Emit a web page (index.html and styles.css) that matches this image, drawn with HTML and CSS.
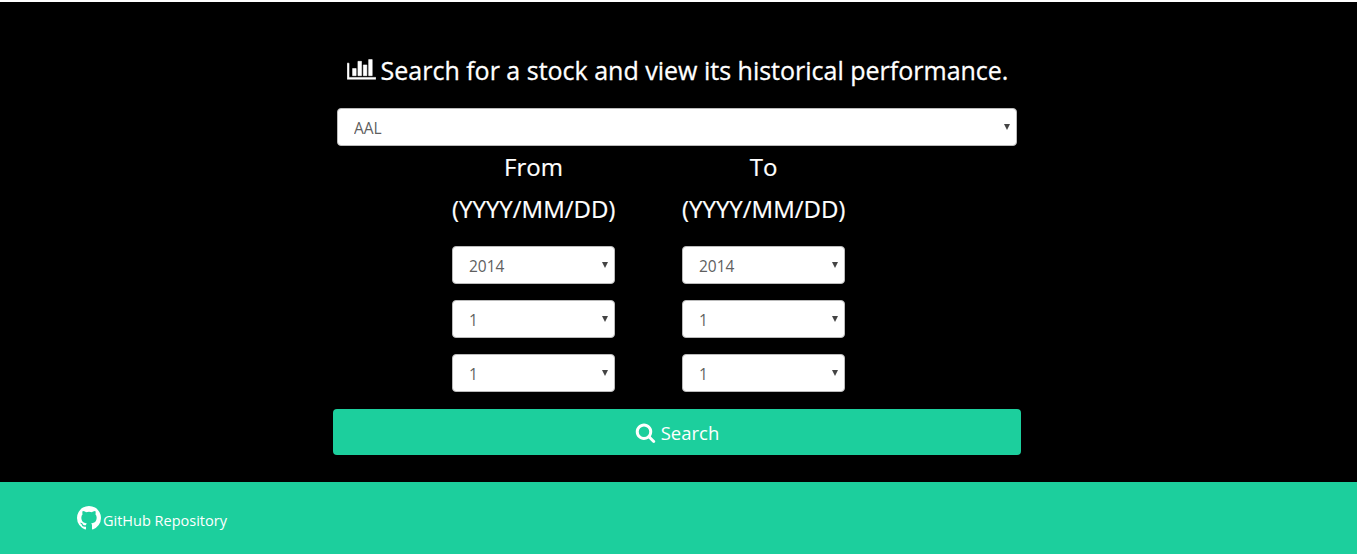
FILE: index.html
```html
<!DOCTYPE html>
<html lang="en">
<head>
<meta charset="utf-8">
<title>Stock history</title>
<link rel="stylesheet" href="styles.css">
</head>
<body>
<main class="hero">
  <h1 class="title">
    <svg class="icon-chart" viewBox="0 0 2048 1792" aria-hidden="true"><path d="M640 896v512h-256v-512h256zm384-512v1024h-256v-1024h256zm1024 1152v128h-2048v-1152h128v1024h1920zm-640-896v768h-256v-768h256zm384-384v1152h-256v-1152h256z"/></svg>
    <span>Search for a stock and view its historical performance.</span>
  </h1>
  <form class="form">
    <div class="select-wrap"><select class="select"><option>AAL</option></select></div>
    <div class="dates">
      <div class="date-col">
        <div class="date-label">From<br>(YYYY/MM/DD)</div>
        <div class="select-wrap"><select class="select"><option>2014</option></select></div>
        <div class="select-wrap"><select class="select"><option>1</option></select></div>
        <div class="select-wrap"><select class="select"><option>1</option></select></div>
      </div>
      <div class="date-col">
        <div class="date-label">To<br>(YYYY/MM/DD)</div>
        <div class="select-wrap"><select class="select"><option>2014</option></select></div>
        <div class="select-wrap"><select class="select"><option>1</option></select></div>
        <div class="select-wrap"><select class="select"><option>1</option></select></div>
      </div>
    </div>
    <button class="search" type="button">
      <svg class="icon-search" viewBox="0 0 1792 1792" aria-hidden="true"><path d="M1216 832q0-185-131.5-316.5t-316.5-131.5-316.5 131.5-131.5 316.5 131.5 316.5 316.5 131.5 316.5-131.5 131.5-316.5zm512 832q0 52-38 90t-90 38q-54 0-90-38l-343-342q-179 124-399 124-143 0-273.5-55.5t-225-150-150-225-55.5-273.5 55.5-273.5 150-225 225-150 273.5-55.5 273.5 55.5 225 150 150 225 55.5 273.5q0 220-124 399l343 343q37 37 37 90z"/></svg>
      <span>Search</span>
    </button>
  </form>
</main>
<footer class="footer">
  <a class="repo" href="#">
    <svg class="icon-github" viewBox="128 128 1536 1536" aria-hidden="true"><path d="M1664 896q0 251-146.5 451.5t-378.5 278.5q-27 5-39.5-7t-12.5-30v-211q0-97-52-142 57-6 102.5-18t94-39 81-66.5 53-105 20.5-150.5q0-121-79-206 37-91-8-204-28-9-81 11t-92 44l-38 24q-93-26-192-26t-192 26q-16-11-42.5-27t-83.5-38.5-86-13.5q-44 113-7 204-79 85-79 206 0 85 20.5 150t52.5 105 80.5 67 94 39 102.5 18q-40 36-49 103-21 10-45 15t-57 5-65.5-21.5-55.5-62.5q-19-32-48.5-52t-49.5-24l-20-3q-21 0-29 4.5t-5 11.5 9 14 13 12l7 5q22 10 43.5 38t31.5 51l10 23q13 38 44 61.5t67 30 69.5 7 55.5-3.5l23-4q0 38 .5 89t.5 54q0 18-13 30t-40 7q-232-78-378.5-278.5t-146.5-451.5q0-209 103-385.5t279.5-279.5 385.5-103 385.5 103 279.5 279.5 103 385.5z"/></svg>
    <span>GitHub Repository</span>
  </a>
</footer>
</body>
</html>
```
FILE: styles.css
```css
* { box-sizing: border-box; }
html, body { margin: 0; background: #fff; }
body {
  height: 554px;
  overflow: hidden;
  padding-top: 2px;
  font-family: "Open Sans", sans-serif;
  display: flex;
  flex-direction: column;
}
.hero {
  height: 480px;
  margin-right: 2px;
  padding-right: 3px;
  background: #000;
  color: #fff;
  display: flex;
  flex-direction: column;
  align-items: center;
  padding-top: 49px;
}
.title {
  margin: 0 0 19px;
  height: 38px;
  font-size: 25px;
  font-weight: 500;
  -webkit-text-stroke: 0.3px #fff;
  line-height: 38px;
  display: flex;
  align-items: center;
  gap: 5px;
  white-space: nowrap;
}
.icon-chart {
  width: 29px;
  height: 25px;
  fill: #fff;
  stroke: #fff;
  stroke-width: 40;
  margin-top: -3px;
  margin-left: 1px;
}
.form {
  width: 688px;
  display: flex;
  flex-direction: column;
  padding: 0 4px;
}
.select-wrap { position: relative; height: 38px; }
.select-wrap::after {
  content: "";
  position: absolute;
  top: 16px;
  right: 7px;
  border-style: solid;
  border-width: 6px 3px 0;
  border-color: #444 transparent transparent;
}
.select {
  appearance: none;
  width: 100%;
  height: 38px;
  padding: 2px 16px 0;
  background: #fff;
  border: 1px solid #bbb;
  border-radius: 4px;
  color: #5f5f5f;
  font: 15.5px "Open Sans", sans-serif;
}
.dates {
  display: flex;
  gap: 67px;
  padding-left: 115px;
}
.date-col {
  width: 163px;
  display: flex;
  flex-direction: column;
  gap: 16px;
}
.date-label {
  text-align: center;
  font-size: 24px;
  -webkit-text-stroke: 0.2px #fff;
  line-height: 42px;
  white-space: nowrap;
}
.search {
  margin: 17px -4px 0;
  height: 46px;
  border: 0;
  border-radius: 4px;
  background: #1ccf9d;
  color: #fff;
  font: 18.5px "Open Sans", sans-serif;
  display: flex;
  align-items: center;
  justify-content: center;
  gap: 5px;
}
.icon-search { width: 21px; height: 21px; fill: #fff; }
.footer {
  flex: 1;
  margin-right: 2px;
  background: #1ccf9d;
  padding: 29px 0 0 77px;
}
.repo {
  display: flex;
  align-items: center;
  gap: 2px;
  color: #fff;
  font-size: 14.5px;
  font-weight: 400;
  text-decoration: none;
}
.icon-github { width: 24px; height: 24px; fill: #fff; margin-top: -5px; }
```
